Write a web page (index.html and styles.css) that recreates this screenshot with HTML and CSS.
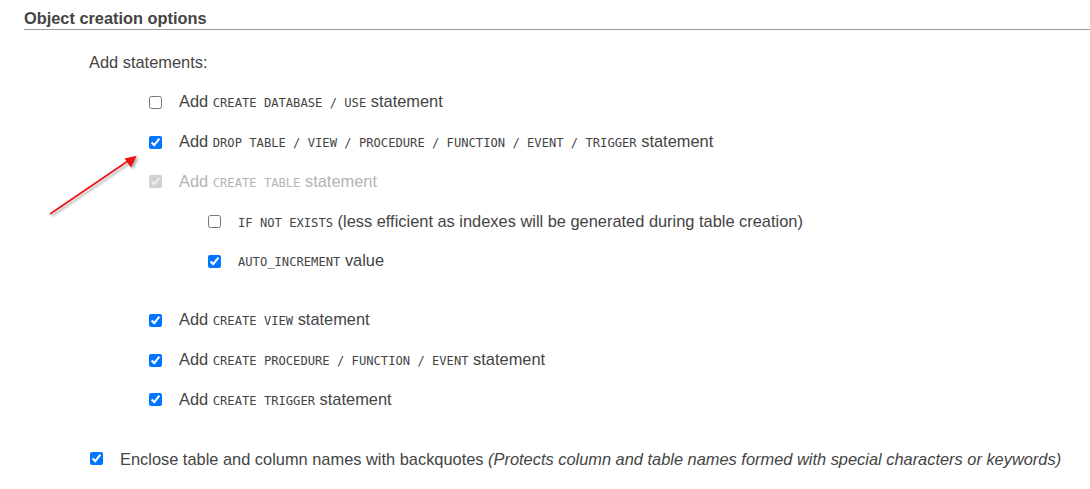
FILE: index.html
```html
<!DOCTYPE html>
<html>
<head>
<meta charset="utf-8">
<link rel="stylesheet" href="styles.css">
</head>
<body>
<div class="page">
  <h2 class="title">Object creation options</h2>
  <div class="intro">Add statements:</div>
  <div class="group">
    <label class="opt"><input type="checkbox"><span>Add <code>CREATE DATABASE / USE</code> statement</span></label>
    <label class="opt"><input type="checkbox" checked><span>Add <code>DROP TABLE / VIEW / PROCEDURE / FUNCTION / EVENT / TRIGGER</code> statement</span></label>
    <label class="opt disabled"><input type="checkbox" checked disabled><span>Add <code>CREATE TABLE</code> statement</span></label>
    <div class="sub">
      <label class="opt"><input type="checkbox"><span><code>IF NOT EXISTS</code> (less efficient as indexes will be generated during table creation)</span></label>
      <label class="opt"><input type="checkbox" checked><span><code>AUTO_INCREMENT</code> value</span></label>
    </div>
    <div class="group2">
      <label class="opt"><input type="checkbox" checked><span>Add <code>CREATE VIEW</code> statement</span></label>
      <label class="opt"><input type="checkbox" checked><span>Add <code>CREATE PROCEDURE / FUNCTION / EVENT</code> statement</span></label>
      <label class="opt"><input type="checkbox" checked><span>Add <code>CREATE TRIGGER</code> statement</span></label>
    </div>
  </div>
  <label class="opt enclose"><input type="checkbox" checked><span>Enclose table and column names with backquotes <em>(Protects column and table names formed with special characters or keywords)</em></span></label>
  <svg class="arrow" width="110" height="80" viewBox="0 0 110 80">
    <defs>
      <filter id="sh" x="-20%" y="-20%" width="140%" height="140%">
        <feGaussianBlur stdDeviation="1.2"/>
      </filter>
    </defs>
    <g transform="translate(2,2)" opacity="0.45" filter="url(#sh)">
      <line x1="10" y1="69" x2="88" y2="16" stroke="#555" stroke-width="1.6"/>
      <polygon points="96.7,10.7 84.5,13.5 91,22.5" fill="#555"/>
    </g>
    <line x1="10" y1="69" x2="88" y2="16" stroke="#ee1111" stroke-width="1.6"/>
    <polygon points="96.7,10.7 84.5,13.5 91,22.5" fill="#ee1111"/>
  </svg>
</div>
</body>
</html>
```

FILE: styles.css
```css
html, body {
  margin: 0;
  padding: 0;
  background: #fff;
}

.page {
  position: relative;
  padding-left: 24px;
  font-family: "Liberation Sans", Arial, sans-serif;
  font-size: 16.4px;
  color: #444;
}

.title {
  margin: 0;
  padding-top: 7px;
  font-size: 16.35px;
  line-height: 22px;
  font-weight: bold;
  color: #444;
  border-bottom: 1px solid #9a9a9a;
}

.intro {
  margin: 12.75px 0 0 65px;
  height: 39.75px;
  display: flex;
  align-items: center;
}

.group {
  margin-left: 125px;
  display: flex;
  flex-direction: column;
}

.sub {
  margin-left: 59px;
  display: flex;
  flex-direction: column;
}

.group2 {
  margin-top: 19.25px;
  display: flex;
  flex-direction: column;
}

.opt {
  height: 39.75px;
  display: flex;
  align-items: center;
  gap: 17px;
  line-height: 20px;
}

.opt input {
  margin: 0;
  width: 13px;
  height: 13px;
  flex: none;
}

.opt.disabled {
  color: #b4b4b4;
}

.enclose {
  margin-top: 19.25px;
  margin-left: 66px;
}

code {
  font-family: "DejaVu Sans Mono", "Liberation Mono", monospace;
  font-size: 12.15px;
}

em {
  font-style: italic;
}

.arrow {
  position: absolute;
  left: 40px;
  top: 145px;
}
```
